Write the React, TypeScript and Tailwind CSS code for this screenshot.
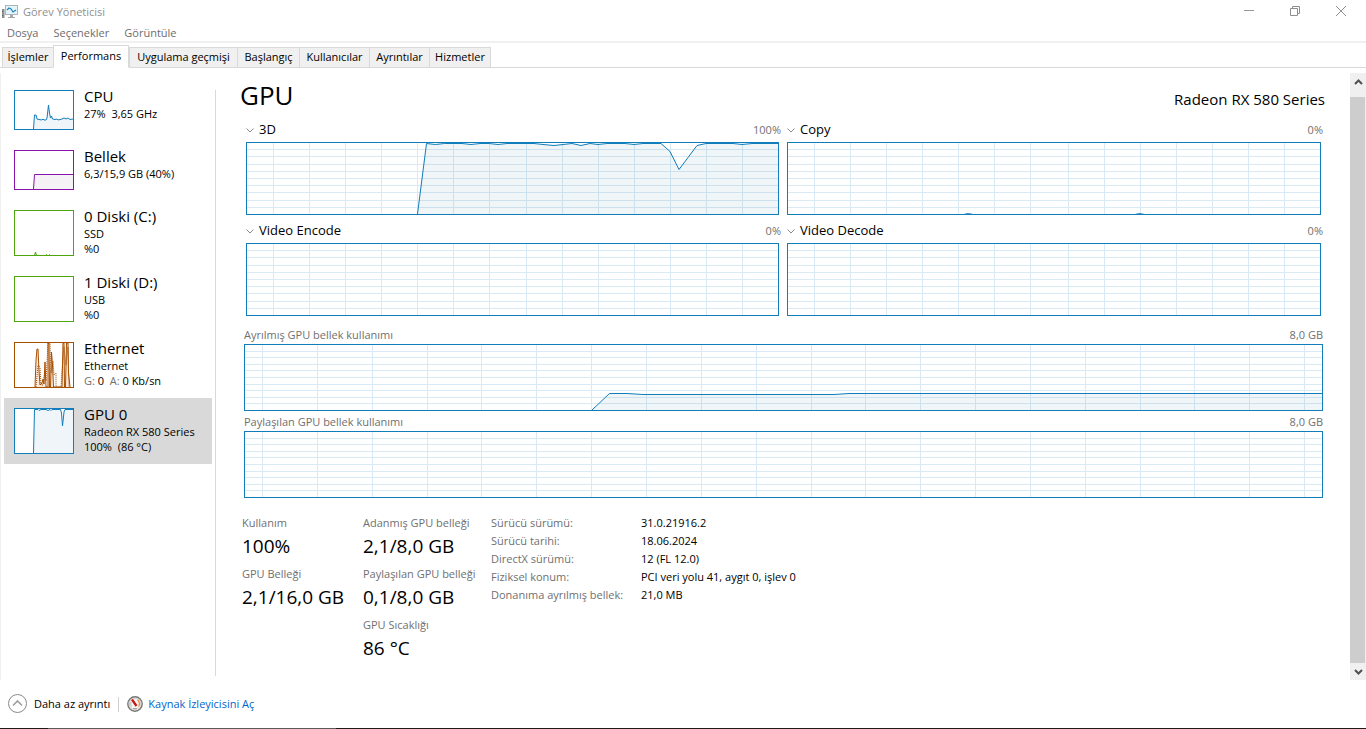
import React from 'react'

interface ITab {
  label: string
  width: string
  active?: boolean
}

interface IDevice {
  name: string
  lines: React.ReactNode[]
  frame: string
  height: number
  color: string
  fill: string
  line?: string
  dashed?: string
  selected?: boolean
}

interface IEngine {
  name: string
  value: string
  line?: string
}

interface IStat {
  label: string
  value: string
}

const tabs: ITab[] = [
  { label: 'İşlemler', width: 'w-[52px]' },
  { label: 'Performans', width: 'w-[76px]', active: true },
  { label: 'Uygulama geçmişi', width: 'w-[109px]' },
  { label: 'Başlangıç', width: 'w-[63px]' },
  { label: 'Kullanıcılar', width: 'w-[71px]' },
  { label: 'Ayrıntılar', width: 'w-[61px]' },
  { label: 'Hizmetler', width: 'w-[62px]' }
]

const devices: IDevice[] = [
  {
    name: 'CPU',
    lines: ['27%  3,65 GHz'],
    frame: 'h-10 border-[#117dbb]',
    height: 38,
    color: '#117dbb',
    fill: '#f0f5f9',
    line: '18.5,38 19.5,24 21,24 22,28 24,28.5 27,29 28,28 29,29 31,29 32,27 33.5,14 34.5,22 35.5,27 36.5,25 37.5,28 40,28.5 42,28 43,29 47,28 49,27 51,28 53,27 55,28.5 58,28'
  },
  {
    name: 'Bellek',
    lines: ['6,3/15,9 GB (40%)'],
    frame: 'h-10 border-[#8b12ae]',
    height: 38,
    color: '#8b12ae',
    fill: '#f4f2f4',
    line: '18.5,38 19.5,23.5 58,23.5'
  },
  {
    name: '0 Diski (C:)',
    lines: ['SSD', '%0'],
    frame: 'h-[46px] border-[#4da60c]',
    height: 44,
    color: '#4da60c',
    fill: '#eff7e9',
    line: '19,46 20.5,41 22,46 31,46 31.5,43.5 32,46 34,46 34.5,43.5 35,46'
  },
  {
    name: '1 Diski (D:)',
    lines: ['USB', '%0'],
    frame: 'h-[46px] border-[#4da60c]',
    height: 44,
    color: '#4da60c',
    fill: '#eff7e9'
  },
  {
    name: 'Ethernet',
    lines: [
      'Ethernet',
      <>
        <span className="text-[#707070]">G:</span> {'0  '}
        <span className="text-[#707070]">A:</span> 0 Kb/sn
      </>
    ],
    frame: 'h-[46px] border-[#a74f01]',
    height: 44,
    color: '#a74f01',
    fill: '#fbe9dc',
    line: '20,44 21,17 22,6 23,6 24,28 25,42 27,40 28,36 29,41 30,19 31,44 33,44 33,0 34,0 34.5,44 35.5,44 36.5,9 37.5,22 38.5,44 47,44 48,0 49,0 49.5,44 50.5,44 51.5,0 53,0 53.5,30 55,44',
    dashed: '21,44 23,22 25,24 26,42 28,42 30,28 31,38 33,0 35,0 36,30 38,18 39,32 41,30 41,44 46,44 47,28 49,4 51,22 53,4 54,44'
  },
  {
    name: 'GPU 0',
    lines: ['Radeon RX 580 Series', '100%  (86 °C)'],
    frame: 'h-[46px] border-[#117dbb]',
    height: 44,
    color: '#117dbb',
    fill: '#f0f5f9',
    line: '18.5,44 19.5,0.5 23,0.5 24,1.5 26,0.5 31,0.5 33,1.5 35,0.5 36,1.5 37,0.5 45.5,0.5 46.5,4 47.5,17 49,3 50,0.5 58,0.5',
    selected: true
  }
]

const engines: IEngine[] = [
  {
    name: '3D',
    value: '100%',
    line: '170.5,71 179.5,0.5 188.5,1.5 197.5,0.5 215,0.5 224,1.5 233,0.5 242,0.5 251,1.5 260,0.5 287,0.5 296,1.5 307,2.5 316,1.5 325,0.5 334,2.5 343,0.5 351,1.5 360,0.5 378,0.5 387,1.5 396,0.5 414,0.5 423,8.5 432,26.5 441,14.5 450,2.5 459,0.5 486,0.5 495,1.5 505,0.5 531,0.5'
  },
  { name: 'Copy', value: '0%', line: '168,73 180,70.5 192,73 339,73 351,70.5 363,73' },
  { name: 'Video Encode', value: '0%' },
  { name: 'Video Decode', value: '0%' }
]

const memoryCharts: IEngine[] = [
  {
    name: 'Ayrılmış GPU bellek kullanımı',
    value: '8,0 GB',
    line: '347,65 364.5,48.5 382,48.5 398,49.5 589,49.5 604,48.5 1077,48.5'
  },
  { name: 'Paylaşılan GPU bellek kullanımı', value: '8,0 GB' }
]

const statColumns: IStat[][] = [
  [
    { label: 'Kullanım', value: '100%' },
    { label: 'GPU Belleği', value: '2,1/16,0 GB' }
  ],
  [
    { label: 'Adanmış GPU belleği', value: '2,1/8,0 GB' },
    { label: 'Paylaşılan GPU belleği', value: '0,1/8,0 GB' },
    { label: 'GPU Sıcaklığı', value: '86 °C' }
  ]
]

const details: IStat[] = [
  { label: 'Sürücü sürümü:', value: '31.0.21916.2' },
  { label: 'Sürücü tarihi:', value: '18.06.2024' },
  { label: 'DirectX sürümü:', value: '12 (FL 12.0)' },
  { label: 'Fiziksel konum:', value: 'PCI veri yolu 41, aygıt 0, işlev 0' },
  { label: 'Donanıma ayrılmış bellek:', value: '21,0 MB' }
]

// Closes the line down to the baseline so that it can be filled
const toArea = (line: string, height: number) => {
  const points = line.split(' ')
  const first = points[0].split(',')[0]
  const last = points[points.length - 1].split(',')[0]
  return `${first},${height} ${line} ${last},${height}`
}

const gridPath = (width: number, height: number, start: number, step: number) => {
  let d = ''
  for (let x = start; x < width; x += step) {
    d += `M${Math.round(x) + 0.5} 0V${height}`
  }
  for (let i = 1; i < 10; i++) {
    d += `M0 ${Math.round((i * (height + 1)) / 10) - 0.5}H${width}`
  }
  return d
}

const Chart: React.FC<{
  width: number
  height: number
  start: number
  step: number
  line?: string
  className: string
}> = ({ width, height, start, step, line, className }) => (
  <svg
    viewBox={`0 0 ${width} ${height}`}
    preserveAspectRatio="none"
    className={`block w-full border border-[#117dbb] bg-white ${className}`}
  >
    <path
      d={gridPath(width, height, start, step)}
      stroke="#d9eaf4"
      fill="none"
      shapeRendering="crispEdges"
      vectorEffect="non-scaling-stroke"
    />
    {line && (
      <>
        <polygon points={toArea(line, height)} fill="#2a6fa0" fillOpacity="0.07" />
        <polyline
          points={line}
          fill="none"
          stroke="#117dbb"
          vectorEffect="non-scaling-stroke"
        />
      </>
    )}
  </svg>
)

const Chevron: React.FC = () => (
  <svg width="8" height="5" viewBox="0 0 8 5" fill="none" stroke="#8a8a8a">
    <path d="M0.5 0.5L4 4L7.5 0.5" />
  </svg>
)

const AppIcon: React.FC = () => (
  <svg width="16" height="14" viewBox="0 0 16 14" fill="none">
    <path d="M0 4H2V13H0Z" fill="#8d9092" />
    <path d="M2 4H3V13H2Z" fill="#c3c5c6" />
    <path d="M0.5 6V7M0.5 10V11" stroke="#5e6163" />
    <rect x="3.5" y="0.5" width="12" height="9" fill="#e2f4fc" stroke="#b1b4b6" />
    <path d="M5 5L7 3L9 4L11 7L12.5 6L14 5" stroke="#2583b5" strokeWidth="1.2" />
    <path d="M8 10H11V12H13V13H6V12H8Z" fill="#a3a6a8" />
  </svg>
)

const ResourceIcon: React.FC = () => (
  <svg width="16" height="16" viewBox="0 0 16 16" fill="none">
    <circle cx="8" cy="8" r="7.2" fill="#f7f5f0" stroke="#777" strokeWidth="1.4" />
    <circle cx="8" cy="8" r="5.6" stroke="#d2cfc7" />
    <path d="M10.5 4A4.6 4.6 0 0 1 11.5 10.5" stroke="#e8893f" strokeWidth="1.2" />
    <path d="M4.5 10.5A4.6 4.6 0 0 1 4 6" stroke="#b5b5b5" />
    <path d="M5 3.5L9.5 10" stroke="#c8141b" strokeWidth="2.2" />
    <path d="M6 12.5H10" stroke="#a5a5a5" />
  </svg>
)

const App: React.FC = () => {
  return (
    <div className="flex min-h-screen flex-col bg-white font-['Open_Sans','Noto_Sans',sans-serif] text-[11px] text-black">
      {/* Title bar */}
      <header className="flex h-6 items-center pl-0.5 pr-0.5 text-[#8f8f8f]">
        <AppIcon />
        <h1 className="ml-[5px] flex-1">Görev Yöneticisi</h1>
        <button aria-label="Simge durumuna küçült" className="flex h-5 w-[46px] items-center justify-center">
          <svg width="10" height="10" viewBox="0 0 10 10" stroke="#999">
            <path d="M0 3.5H10" />
          </svg>
        </button>
        <button aria-label="Önceki boyut" className="flex h-5 w-[46px] items-center justify-center pb-[3px]">
          <svg width="10" height="10" viewBox="0 0 10 10" fill="none" stroke="#8f8f8f">
            <path d="M0.5 2.5H7.5V9.5H0.5ZM2.5 2.5V0.5H9.5V7.5H7.5" />
          </svg>
        </button>
        <button aria-label="Kapat" className="flex h-5 w-[46px] items-center justify-center pb-[3px]">
          <svg width="10" height="10" viewBox="0 0 10 10" stroke="#8f8f8f">
            <path d="M0 0L10 10M10 0L0 10" />
          </svg>
        </button>
      </header>

      {/* Menu */}
      <nav className="flex h-[19px] items-start gap-[15px] border-b-2 border-[#f0f0f0] pl-[7px] leading-[17px] text-[#6d6d6d]">
        <button>Dosya</button>
        <button>Seçenekler</button>
        <button>Görüntüle</button>
      </nav>

      {/* Tabs */}
      <div role="tablist" className="mb-[5px] flex h-[25px] items-end border-b border-[#d9d9d9] pl-0.5">
        {tabs.map((tab) => (
          <button
            key={tab.label}
            role="tab"
            aria-selected={!!tab.active}
            className={`-mb-px flex items-center justify-center whitespace-nowrap border border-[#d9d9d9] ${tab.width} ${
              tab.active ? 'h-[23px] border-b-white bg-white' : '-mr-px h-[21px] bg-[#f0f0f0]'
            }`}
          >
            {tab.label}
          </button>
        ))}
      </div>

      <div className="flex flex-1 border-l border-[#f0f0f0]">
        {/* Device list */}
        <aside className="ml-[3px] w-52 shrink-0 pt-[7px]">
          {devices.map((device) => (
            <button
              key={device.name}
              className={`flex w-full items-start gap-2.5 p-2.5 text-left ${
                device.selected ? 'bg-[#d9d9d9]' : ''
              }`}
            >
              <svg
                viewBox={`0 0 58 ${device.height}`}
                className={`w-[60px] shrink-0 border bg-white ${device.frame}`}
              >
                {device.line && (
                  <>
                    <polygon points={toArea(device.line, device.height)} fill={device.fill} />
                    <polyline points={device.line} fill="none" stroke={device.color} />
                  </>
                )}
                {device.dashed && (
                  <polyline
                    points={device.dashed}
                    fill="none"
                    stroke={device.color}
                    strokeDasharray="1 1"
                  />
                )}
              </svg>
              <span className="-mt-1 block">
                <span className="block text-[15px] leading-5">{device.name}</span>
                {device.lines.map((text, index) => (
                  <span key={index} className="block h-[15px] whitespace-pre leading-[15px]">
                    {text}
                  </span>
                ))}
              </span>
            </button>
          ))}
        </aside>

        <div className="mb-1 ml-[3px] mt-[17px] w-px shrink-0 bg-[#d9d9d9]" />

        {/* GPU details */}
        <main className="min-w-0 flex-1 pb-2 pl-7 pr-[27px] pt-1">
          <div className="-ml-1 -mr-0.5 flex h-11 items-baseline justify-between">
            <h2 className="text-[26px] leading-9">GPU</h2>
            <p className="text-[15px]">Radeon RX 580 Series</p>
          </div>

          <div className="grid grid-cols-[533fr_534fr] gap-x-2 gap-y-[7px] px-0.5">
            {engines.map((engine) => (
              <section key={engine.name}>
                <div className="-mr-0.5 mb-[3px] flex h-[18px] items-center">
                  <button className="flex items-center gap-[5px] text-[13px]">
                    <Chevron />
                    {engine.name}
                  </button>
                  <span className="ml-auto text-[#707070]">{engine.value}</span>
                </div>
                <Chart
                  width={531}
                  height={71}
                  start={26}
                  step={36.08}
                  line={engine.line}
                  className="h-[73px]"
                />
              </section>
            ))}
          </div>

          <div className="mt-[11px] flex flex-col gap-[3px]">
            {memoryCharts.map((chart) => (
              <section key={chart.name}>
                <div className="mb-px flex h-4 items-center justify-between text-[#707070]">
                  <h3>{chart.name}</h3>
                  <span>{chart.value}</span>
                </div>
                <Chart
                  width={1077}
                  height={65}
                  start={17}
                  step={54.85}
                  line={chart.line}
                  className="h-[67px]"
                />
              </section>
            ))}
          </div>

          <div className="-ml-0.5 mt-4 flex items-start">
            {statColumns.map((column, index) => (
              <dl key={index} className={index === 0 ? 'w-[121px]' : 'w-32'}>
                {column.map((stat) => (
                  <div key={stat.label} className="mb-[5px] whitespace-nowrap">
                    <dt className="leading-[18px] text-[#707070]">{stat.label}</dt>
                    <dd className="text-[19px] leading-7">{stat.value}</dd>
                  </div>
                ))}
              </dl>
            ))}
            <table className="text-left leading-[18px]">
              <tbody>
                {details.map((detail) => (
                  <tr key={detail.label}>
                    <th className="w-[150px] p-0 font-normal text-[#707070]">{detail.label}</th>
                    <td className="p-0">{detail.value}</td>
                  </tr>
                ))}
              </tbody>
            </table>
          </div>
        </main>

        {/* Scrollbar */}
        <div className="flex w-4 shrink-0 flex-col bg-[#f0f0f0]">
          <button aria-label="Yukarı kaydır" className="flex h-6 items-center justify-center pb-1.5">
            <svg width="9" height="6" viewBox="0 0 9 6" fill="none" stroke="#505050" strokeWidth="2">
              <path d="M1 5L4.5 1.5L8 5" />
            </svg>
          </button>
          <div className="mr-px flex-1 bg-[#cdcdcd]" />
          <button aria-label="Aşağı kaydır" className="flex h-[17px] items-center justify-center">
            <svg width="9" height="6" viewBox="0 0 9 6" fill="none" stroke="#505050" strokeWidth="2">
              <path d="M1 1L4.5 4.5L8 1" />
            </svg>
          </button>
        </div>
      </div>

      {/* Footer */}
      <footer className="flex h-12 items-center pl-2">
        <button className="flex items-center gap-1.5">
          <svg width="20" height="20" viewBox="0 0 20 20" fill="none" stroke="#8a8a8a">
            <circle cx="9.5" cy="9.5" r="9" />
            <path d="M5 11.5L9.5 7L14 11.5" stroke="#a0a0a0" strokeWidth="1.6" />
          </svg>
          Daha az ayrıntı
        </button>
        <div className="mx-2 h-[15px] w-px bg-[#d0d0d0]" />
        <a href="#" className="flex items-center gap-[5px] text-[#0066cc]">
          <ResourceIcon />
          Kaynak İzleyicisini Aç
        </a>
      </footer>
      <div className="flex h-px bg-[#1f1a17]">
        <div className="ml-12 w-72 bg-[#5a5a5a]" />
      </div>
    </div>
  )
}

export default App
